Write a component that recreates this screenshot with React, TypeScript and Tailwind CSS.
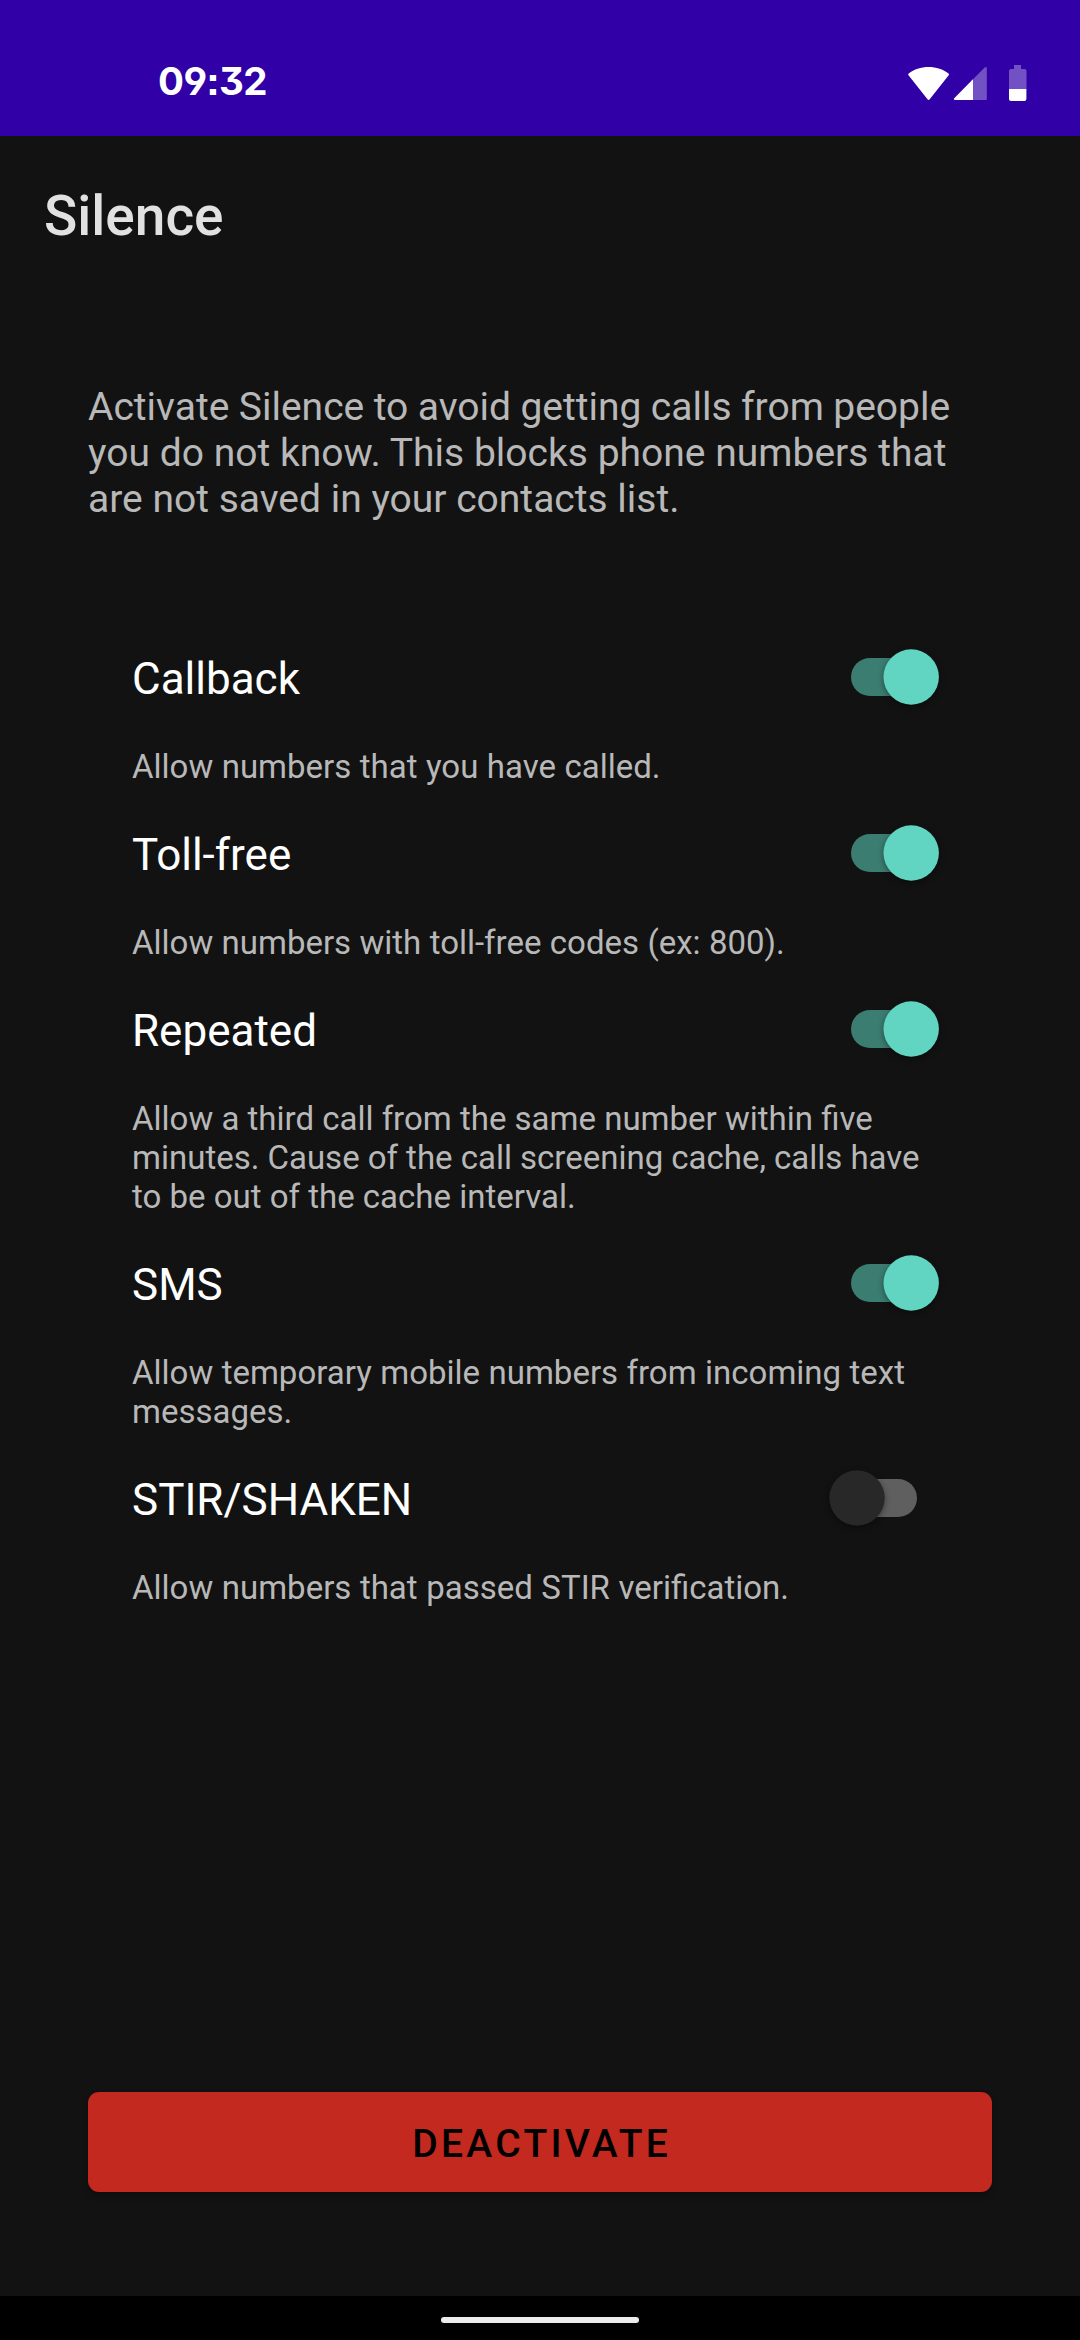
import React from "react";

function Toggle({ on }: { on: boolean }) {
  return (
    <svg width="108" height="72" viewBox="0 0 108 72" className="shrink-0 overflow-visible">
      <rect x="10" y="17" width="66" height="38" rx="19" fill={on ? "#3b7d71" : "#5f5f5f"} />
      <circle
        cx={on ? 70.2 : 16}
        cy="36"
        r="27.7"
        fill={on ? "#61d5c1" : "#282828"}
        className="drop-shadow-[0_2px_3px_rgba(0,0,0,0.4)]"
      />
    </svg>
  );
}

function StatusIcons() {
  return (
    <svg width="122" height="40" viewBox="26 24 122 40" className="mr-[52px] mt-[64px]" fill="#ffffff">
      <path d="M28.5 35.3Q27.6 34.3 28.7 33.5C34 29.3 41 27 48.6 27C56.2 27 63.2 29.3 68.5 33.5Q69.6 34.3 68.7 35.3L49.7 59.2Q48.6 60.6 47.5 59.2Z" />
      <path
        d="M74.8 60Q73.2 59.6 74.3 58.3L104.4 27.7Q106.7 25.9 106.8 28.2V59Q106.8 60 105.8 60Z"
        fill="#7251c4"
      />
      <path d="M74.8 60Q73.2 59.6 74.3 58.3L93 39.3V60Z" />
      <path d="M134 25H141V29H144.4Q146.5 29 146.5 31V49H129V31Q129 29 131 29H134Z" fill="#7251c4" />
      <path d="M129 49H146.4V59Q146.4 61 144.4 61H131Q129 61 129 59Z" />
    </svg>
  );
}

type Line = { text: string; spacing?: string };
type Option = { title: string; lines: Line[]; on: boolean; size: string };

const options: Option[] = [
  {
    title: "Callback",
    lines: [{ text: "Allow numbers that you have called.", spacing: "[word-spacing:0.3px]" }],
    on: true,
    size: "h-[176px]",
  },
  {
    title: "Toll-free",
    lines: [{ text: "Allow numbers with toll-free codes (ex: 800).", spacing: "[word-spacing:0.17px]" }],
    on: true,
    size: "h-[176px]",
  },
  {
    title: "Repeated",
    lines: [
      { text: "Allow a third call from the same number within five" },
      { text: "minutes. Cause of the call screening cache, calls have", spacing: "[word-spacing:-0.1px]" },
      { text: "to be out of the cache interval." },
    ],
    on: true,
    size: "h-[254px]",
  },
  {
    title: "SMS",
    lines: [
      { text: "Allow temporary mobile numbers from incoming text", spacing: "[word-spacing:0.25px]" },
      { text: "messages." },
    ],
    on: true,
    size: "h-[215px]",
  },
  {
    title: "STIR/SHAKEN",
    lines: [{ text: "Allow numbers that passed STIR verification.", spacing: "[word-spacing:0.36px]" }],
    on: false,
    size: "h-[176px]",
  },
];

export default function App() {
  return (
    <div className="flex h-[2340px] w-[1080px] flex-col bg-[#121212] font-['Roboto',sans-serif]">
      <header className="flex h-[136px] items-start justify-between bg-[#3200a7] text-white">
        <span className="ml-[158px] mt-[57px] font-['Inter',sans-serif] text-[38.5px] font-bold leading-[48px] tracking-[-0.5px] [font-feature-settings:'cv04','cv09','ss07','calt'_0]">
          09:32
        </span>
        <StatusIcons />
      </header>
      <h1 className="ml-[44px] mt-[49px] text-[55px] font-medium leading-[62px] text-[#e1e1e1]">Silence</h1>
      <p className="ml-[88px] mt-[137px] whitespace-nowrap text-[39px] leading-[46px] text-[#b8b8b8]">
        <span className="block [word-spacing:-0.24px]">Activate Silence to avoid getting calls from people</span>
        <span className="block [word-spacing:0.1px]">you do not know. This blocks phone numbers that</span>
        <span className="block">are not saved in your contacts list.</span>
      </p>
      <main className="ml-[132px] mt-[119px] flex flex-col">
        {options.map((o) => (
          <section key={o.title} className={o.size}>
            <div className="flex h-[72px] w-[817px] items-center justify-between">
              <h2 className="mt-1 text-[44px] leading-[52px] text-white">{o.title}</h2>
              <Toggle on={o.on} />
            </div>
            <p className="mt-[34px] whitespace-nowrap text-[33px] leading-[39px] text-[#b8b8b8]">
              {o.lines.map((l) => (
                <span key={l.text} className={`block ${l.spacing ?? ""}`}>
                  {l.text}
                </span>
              ))}
            </p>
          </section>
        ))}
      </main>
      <button className="mx-[88px] mb-[104px] mt-auto h-[100px] rounded-[11px] bg-[#c3291e] pl-[3.3px] pt-1 text-[39px] font-medium leading-[46px] tracking-[3.3px] text-black shadow-[0_4px_6px_rgba(0,0,0,0.25)]">
        DEACTIVATE
      </button>
      <footer className="flex h-[44px] items-center justify-center bg-black pt-1">
        <div className="h-[6px] w-[198px] rounded-full bg-[#ececec]" />
      </footer>
    </div>
  );
}
